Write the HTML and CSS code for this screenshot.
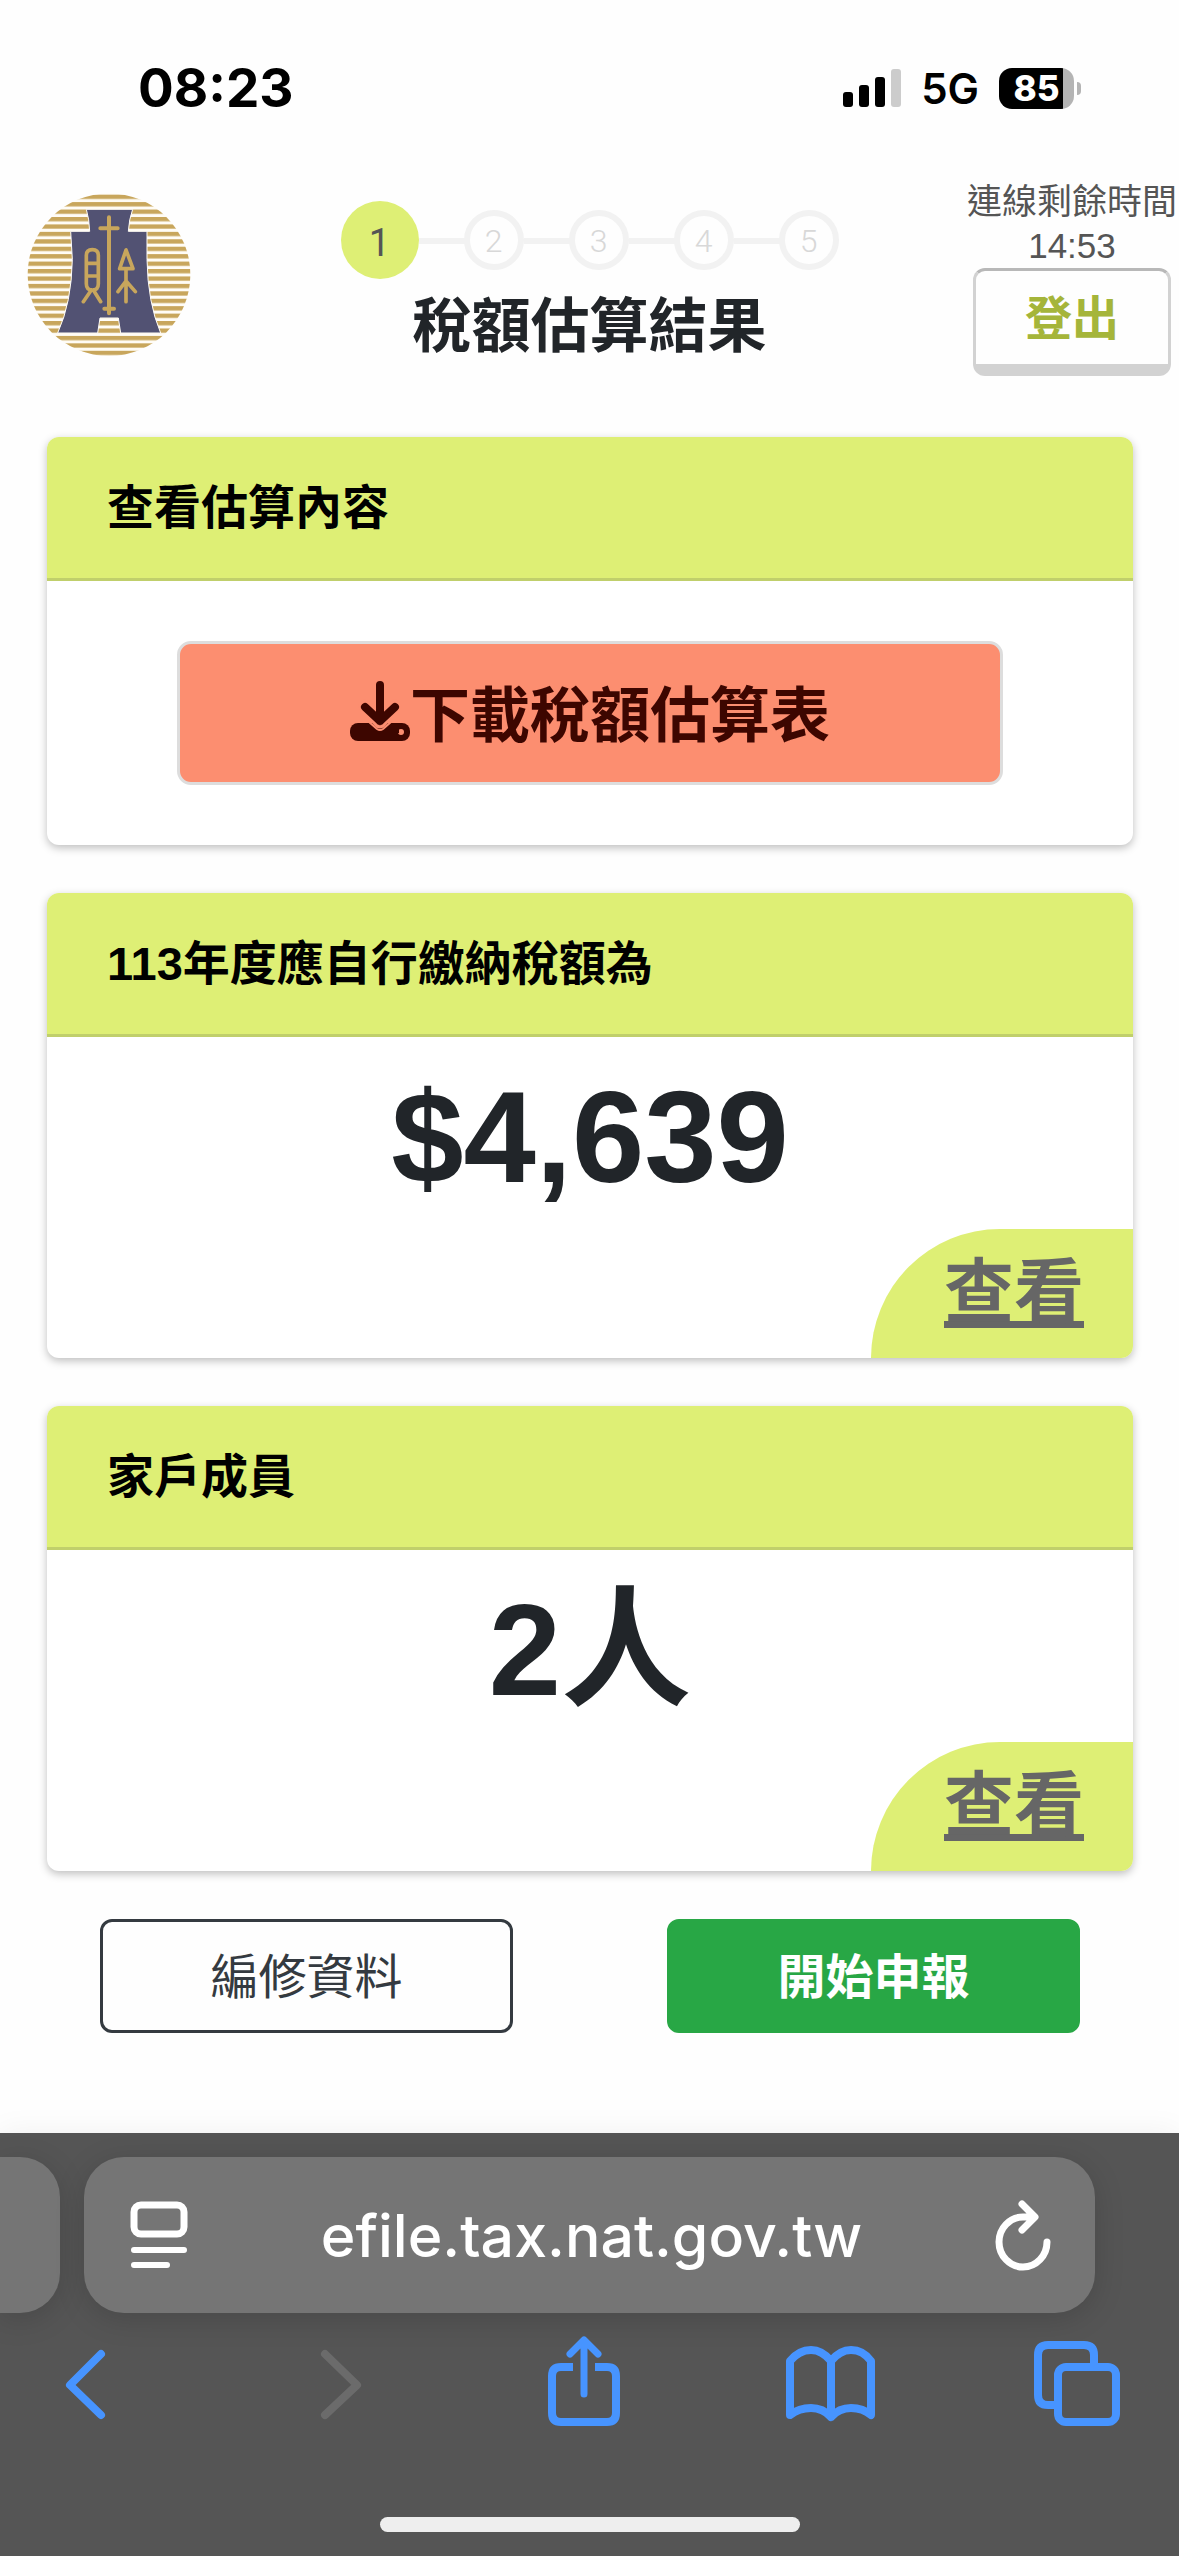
FILE: index.html
```html
<!DOCTYPE html>
<html lang="zh-Hant">
<head>
  <meta charset="UTF-8">
  <meta name="viewport" content="width=device-width">
  <title>稅額估算結果</title>
  <link rel="stylesheet" href="styles.css">
</head>
<body>

  <div class="status-bar">
    <span class="clock">08:23</span>
    <div class="status-icons">
      <svg class="signal" viewBox="0 0 58 38" width="58" height="38">
        <rect x="0" y="23" width="10" height="15" rx="3"/>
        <rect x="16" y="16" width="10" height="22" rx="3"/>
        <rect x="32" y="8" width="10" height="30" rx="3"/>
        <rect x="48" y="0" width="10" height="38" rx="3" fill="#ccc"/>
      </svg>
      <span class="network">5G</span>
      <div class="battery"><span class="battery-level">85</span></div>
    </div>
  </div>

  <header class="header">
    <svg class="logo" viewBox="48 38 498 498" width="166" height="166" role="img" aria-label="財政部">
      <defs>
        <pattern id="stripes" y="46" width="20" height="22.3" patternUnits="userSpaceOnUse">
          <rect width="20" height="13" fill="#c8a65c"/>
        </pattern>
      </defs>
      <circle cx="297" cy="286" r="244" fill="#fffcf5"/>
      <circle cx="297" cy="286" r="244" fill="url(#stripes)"/>
      <path d="M229 90H368Q357 120 355 156H411V240Q413 370 452 461H332L325 416H270L263 461H143Q185 370 187 240L182 156H239Q238 120 229 90Z" fill="#525273" stroke="#fffcf5" stroke-width="3"/>
      <g fill="none" stroke="#c8a65c" stroke-width="11" stroke-linecap="round" stroke-linejoin="round">
        <path d="M297 114V402M271 147H323M283 388H312" stroke-width="12"/>
        <path d="M229 313V228Q229 211 247 211Q265 211 265 228V313Q265 332 247 332Q229 332 229 313ZM230 252H264M230 290H264M244 332L220 367M250 332L272 367"/>
        <path d="M348 212L329 268H369ZM348 268V367M348 305L324 337M348 305L376 337"/>
      </g>
    </svg>

    <div class="progress">
      <ol class="steps">
        <li class="step active">1</li>
        <li class="step">2</li>
        <li class="step">3</li>
        <li class="step">4</li>
        <li class="step">5</li>
      </ol>
      <h1>稅額估算結果</h1>
    </div>

    <div class="session">
      <span>連線剩餘時間</span>
      <span>14:53</span>
      <button class="logout">登出</button>
    </div>
  </header>

  <main>
    <section class="card">
      <h2>查看估算內容</h2>
      <div class="card-body">
        <button class="download">
          <svg viewBox="0 0 60 60" width="60" height="60" stroke-linecap="round" stroke-linejoin="round">
            <rect x="0" y="42" width="60" height="18" rx="8" fill="currentColor"/>
            <circle cx="51" cy="51" r="3" fill="#fc8e70"/>
            <path d="M15 25L30 41L45 25" fill="none" stroke="#fc8e70" stroke-width="13"/>
            <path d="M11 42H18L27 51Q30 54 33 51L42 42H49V52H11Z" fill="currentColor"/>
            <path d="M30 4V40M15 26L30 40L45 26" fill="none" stroke="currentColor" stroke-width="8"/>
            <path d="M19 41L27 48Q30 50 33 48L41 41" fill="none" stroke="#fc8e70" stroke-width="2"/>
          </svg>下載稅額估算表
        </button>
      </div>
    </section>

    <section class="card">
      <h2>113年度應自行繳納稅額為</h2>
      <p class="amount">$4,639</p>
      <a class="view" href="#">查看</a>
    </section>

    <section class="card">
      <h2>家戶成員</h2>
      <p class="amount">2人</p>
      <a class="view" href="#">查看</a>
    </section>

    <div class="actions">
      <button class="btn btn-outline">編修資料</button>
      <button class="btn btn-success">開始申報</button>
    </div>
  </main>

  <footer class="browser">
    <div class="tabs">
      <div class="tab-previous"></div>
      <div class="address">
        <button aria-label="頁面選單">
          <svg viewBox="0 0 58 68" width="58" height="68" fill="none" stroke="#fff" stroke-width="7" stroke-linecap="round">
            <rect x="4" y="4" width="50" height="29" rx="7"/>
            <path d="M4 49H54M4 64H37" stroke-width="6"/>
          </svg>
        </button>
        <span>efile.tax.nat.gov.tw</span>
        <button aria-label="重新載入">
          <svg viewBox="0 0 56 72" width="56" height="72" fill="none" stroke="#fff" stroke-width="7" stroke-linecap="round" stroke-linejoin="round">
            <path d="M52 43A24 25 0 1 1 28 18H39M27 5L40 18L27 31"/>
          </svg>
        </button>
      </div>
      <div class="tab-next"></div>
    </div>

    <nav class="toolbar">
      <button aria-label="上一頁">
        <svg viewBox="0 0 90 92" width="90" height="92">
          <path d="M61 18L30 49L61 79"/>
        </svg>
      </button>
      <button class="disabled" aria-label="下一頁" disabled>
        <svg viewBox="0 0 90 92" width="90" height="92">
          <path d="M37 18L69 49L37 79"/>
        </svg>
      </button>
      <button aria-label="分享">
        <svg viewBox="2 0 90 92" width="90" height="92">
          <path d="M39 31H27Q18 31 18 40V77Q18 86 27 86H73Q82 86 82 77V40Q82 31 73 31H61" stroke-linecap="butt"/>
          <path d="M50 58V5M36 18L50 4L64 18" stroke-width="7"/>
        </svg>
      </button>
      <button aria-label="書籤">
        <svg viewBox="0 0 92 92" width="92" height="92">
          <path d="M48 25Q39 14 28 14Q16 14 7 25V79Q16 72 28 72Q40 72 48 81Q56 72 68 72Q80 72 88 79V25Q80 14 68 14Q57 14 48 25V81"/>
        </svg>
      </button>
      <button aria-label="分頁">
        <svg viewBox="1 0 90 92" width="90" height="92">
          <path d="M22 69H16Q6 69 6 59V19Q6 9 16 9H52Q62 9 62 19V27"/>
          <rect x="26" y="31" width="58" height="55" rx="8"/>
        </svg>
      </button>
    </nav>
    <div class="home-indicator"></div>
  </footer>

</body>
</html>
```
FILE: styles.css
```css
* {
  box-sizing: border-box;
}

body {
  display: flex;
  flex-direction: column;
  min-height: 100vh;
  margin: 0;
  background: #fefefe;
  color: #212529;
  font-family: "Liberation Sans", "Noto Sans CJK TC", sans-serif;
  overflow-x: hidden;
}

h1, h2, p, ol {
  margin: 0;
  padding: 0;
}

button {
  padding: 0;
  border: none;
  background: none;
  font-family: inherit;
  cursor: pointer;
}

svg {
  display: block;
}

/* Status bar */
.status-bar {
  display: flex;
  justify-content: space-between;
  align-items: center;
  height: 176px;
  padding: 0 105px 0 138px;
  color: #000;
  font-family: Inter, sans-serif;
}

.clock {
  font-size: 53px;
  font-weight: 700;
}

.status-icons {
  display: flex;
  align-items: center;
  gap: 20px;
}

.network {
  font-size: 42px;
  font-weight: 600;
}

.battery {
  position: relative;
  width: 75px;
  height: 41px;
  border-radius: 13px;
  background: linear-gradient(to right, #000 85%, #b4b4b4 85%);
  text-align: center;
}

.battery::after {
  content: "";
  position: absolute;
  left: 78px;
  top: 14px;
  width: 4px;
  height: 13px;
  border-radius: 0 4px 4px 0;
  background: #b4b4b4;
}

.battery-level {
  color: #fff;
  font-size: 35px;
  font-weight: 800;
  line-height: 41px;
}

/* Header */
.header {
  display: grid;
  grid-template-columns: 1fr auto 1fr;
  align-items: start;
  padding: 0 2px 0 26px;
}

.logo {
  margin-top: 16px;
}

.progress {
  display: flex;
  flex-direction: column;
  align-items: center;
  gap: 4px;
  padding: 25px 24px 0 0;
}

.steps {
  display: flex;
  align-items: center;
  list-style: none;
}

.step {
  position: relative;
  width: 60px;
  height: 60px;
  margin-left: 45px;
  border: 6px solid #f2f2f2;
  border-radius: 50%;
  color: #d8d8d8;
  font-family: Roboto, sans-serif;
  font-size: 32px;
  font-weight: 300;
  line-height: 50px;
  text-align: center;
}

.step + .step::before {
  content: "";
  position: absolute;
  top: 22px;
  right: 53px;
  width: 46px;
  height: 6px;
  background: #f2f2f2;
}

.step.active {
  width: 78px;
  height: 78px;
  margin-left: 0;
  border: none;
  background: #deef75;
  color: #555;
  font-size: 38px;
  font-weight: 400;
  line-height: 84px;
}

h1 {
  font-size: 59px;
  font-weight: 700;
  line-height: 88px;
}

.session {
  display: flex;
  flex-direction: column;
  align-items: center;
  justify-self: end;
  padding-top: 4px;
  color: #555;
  font-size: 35px;
  line-height: 44px;
}

.logout {
  width: 198px;
  height: 108px;
  padding-bottom: 6px;
  border: 3px solid #d2d2d2;
  border-top-color: #b8b8b8;
  border-bottom-width: 12px;
  border-radius: 12px;
  color: #a5b53a;
  font-size: 47px;
  font-weight: 700;
}

/* Cards */
main {
  display: flex;
  flex-direction: column;
  gap: 48px;
  padding: 61px 46px 96px 47px;
}

.card {
  display: flex;
  flex-direction: column;
  border-radius: 12px;
  background: #fff;
  box-shadow: 0 3px 9px rgba(0, 0, 0, 0.25);
  overflow: hidden;
}

h2 {
  padding: 36px 60px;
  border-bottom: 3px solid #c0cf6b;
  background: #deef75;
  color: #000;
  font-size: 47px;
  font-weight: 700;
  line-height: 69px;
}

.card-body {
  padding: 60px 130px;
}

.download {
  display: flex;
  align-items: center;
  justify-content: center;
  width: 100%;
  height: 144px;
  padding-bottom: 5px;
  border: 3px solid #ddd;
  border-radius: 14px;
  background: #fc8e70;
  color: #3d0600;
  font-size: 60px;
  font-weight: 700;
}

.amount {
  padding-top: 8px;
  font-size: 130px;
  font-weight: 700;
  line-height: 184px;
  text-align: center;
}

.view {
  align-self: flex-end;
  width: 262px;
  padding-left: 24px;
  border-radius: 129px 0 0 0;
  background: #deef75;
  color: #666;
  font-size: 70px;
  font-weight: 700;
  line-height: 129px;
  text-align: center;
}

/* Bottom buttons */
.actions {
  display: flex;
  justify-content: space-between;
  gap: 154px;
  padding: 0 53px;
}

.btn {
  flex: 1;
  height: 114px;
  padding-bottom: 6px;
  border: 3px solid #28a745;
  border-radius: 12px;
  font-size: 48px;
}

.btn-outline {
  border-color: #343a40;
  color: #343a40;
}

.btn-success {
  background: #28a745;
  color: #fff;
  font-weight: 700;
}

/* Browser bars */
.browser {
  margin-top: auto;
  background: #555;
  box-shadow: 0 0 30px rgba(0, 0, 0, 0.06);
}

.tabs {
  display: flex;
  gap: 24px;
  padding-top: 24px;
}

.tab-previous,
.address {
  background: #757575;
  box-shadow: 0 6px 30px rgba(0, 0, 0, 0.15);
}

.tab-previous {
  width: 60px;
  border-radius: 0 40px 40px 0;
}

.address {
  display: flex;
  flex: 1;
  align-items: center;
  justify-content: space-between;
  height: 156px;
  padding: 0 44px 0 46px;
  border-radius: 40px;
  color: #fff;
  font-family: Inter, sans-serif;
  font-size: 59px;
  font-weight: 500;
}

.tab-next {
  width: 60px;
}

.toolbar {
  display: flex;
  justify-content: space-between;
  padding: 23px 56px 0 40px;
}

.toolbar svg {
  fill: none;
  stroke: #4794ff;
  stroke-width: 8;
  stroke-linecap: round;
  stroke-linejoin: round;
}

.toolbar .disabled svg {
  stroke: #6b6b6b;
}

.home-indicator {
  width: 420px;
  height: 15px;
  margin: 89px auto 24px;
  border-radius: 8px;
  background: #eee;
}
```
